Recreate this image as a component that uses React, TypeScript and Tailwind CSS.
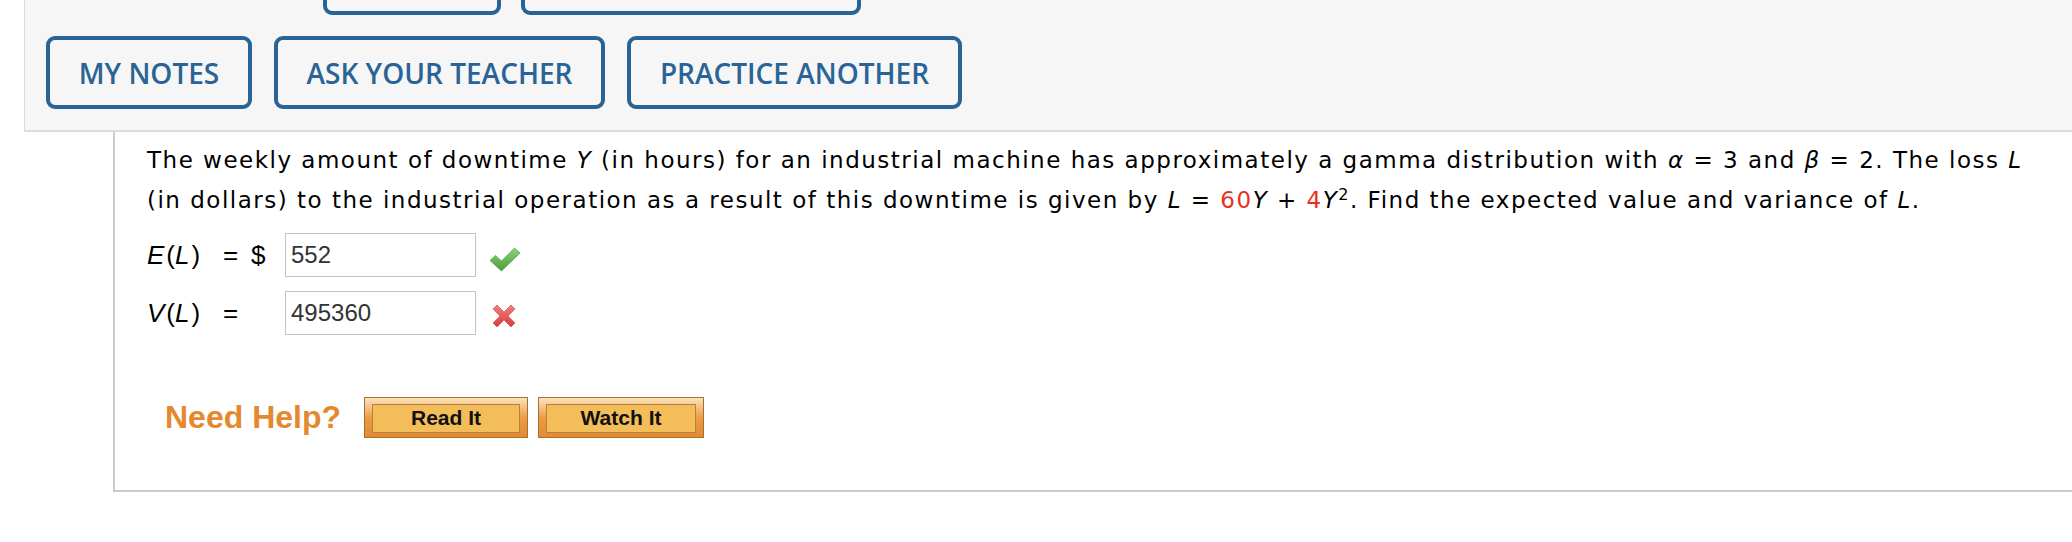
import React from 'react';

const btn =
  'flex h-[73px] shrink-0 items-center justify-center rounded-[9px] border-4 border-[#2a6496] bg-[#f6f6f6] text-[28px] font-semibold uppercase text-[#2a6496]';

function CheckMark() {
  return (
    <svg width="32" height="25" viewBox="0 0 32 25">
      <defs>
        <linearGradient id="ck" x1="0" y1="0" x2="0" y2="1">
          <stop offset="0" stopColor="#92d27c" />
          <stop offset="1" stopColor="#4a9a3a" />
        </linearGradient>
      </defs>
      <path d="M1 13.5 L6.5 8.5 L12.5 14 L25.5 1 L31 6 L12.5 24 Z" fill="url(#ck)" stroke="#5aa548" strokeWidth="0.8" strokeLinejoin="round" />
    </svg>
  );
}

function CrossMark() {
  return (
    <svg width="26" height="26" viewBox="0 0 26 26">
      <defs>
        <linearGradient id="cx" x1="0" y1="0" x2="0" y2="1">
          <stop offset="0" stopColor="#f28080" />
          <stop offset="1" stopColor="#d63c3c" />
        </linearGradient>
      </defs>
      <path
        d="M2 6 L6 2 L13 9 L20 2 L24 6 L17 13 L24 20 L20 24 L13 17 L6 24 L2 20 L9 13 Z"
        fill="url(#cx)"
        stroke="#e05a5a"
        strokeWidth="0.8"
        strokeLinejoin="round"
      />
    </svg>
  );
}

function HelpButton({ label, width }: { label: string; width: string }) {
  return (
    <div className={`${width} h-[41px] border border-[#a8702f] bg-gradient-to-b from-[#fbe2bb] via-[#ec9c42] to-[#e28a33] pt-[6px] pb-[4px] px-[7px]`}>
      <div className="flex h-full items-center justify-center border border-[#b88142] bg-[#f3bd5a] text-[21px] font-bold text-[#111]" style={{ fontFamily: '"Liberation Sans", Arial, sans-serif' }}>
        {label}
      </div>
    </div>
  );
}

export default function App() {
  return (
    <div className="h-[542px] w-full overflow-hidden bg-white">
      {/* toolbar panel */}
      <div className="ml-[24px] flex h-[132px] flex-col border-b-2 border-l border-[#dcdcdc] bg-[#f6f6f6]" style={{ fontFamily: '"Open Sans", sans-serif' }}>
        <div className="-mt-[58px] flex gap-[20px] pl-[298px]">
          <div className={`${btn} w-[178px]`} />
          <div className={`${btn} w-[340px]`} />
        </div>
        <div className="mt-[21px] flex gap-[22px] pl-[21px]">
          <button className={`${btn} w-[206px]`}>My Notes</button>
          <button className={`${btn} w-[331px]`}>Ask Your Teacher</button>
          <button className={`${btn} w-[335px]`}>Practice Another</button>
        </div>
      </div>

      {/* question box */}
      <div className="ml-[113px] h-[360px] border-b-2 border-l-2 border-[#cccccc] pl-[32px] pt-[8px]">
        <p className="whitespace-nowrap text-[23px] leading-[40px] tracking-[1.5px] text-black" style={{ fontFamily: '"DejaVu Sans", Verdana, sans-serif' }}>
          The weekly amount of downtime <i>Y</i> (in hours) for an industrial machine has approximately a gamma distribution with <i>α</i> = 3 and <i>β</i> = 2. The loss <i>L</i>
          <br />
          (in dollars) to the industrial operation as a result of this downtime is given by <i>L</i> = <span className="text-[#e3321f]">60</span><i>Y</i> + <span className="text-[#e3321f]">4</span><i>Y</i>
          <sup className="text-[16px]">2</sup>. Find the expected value and variance of <i>L</i>.
        </p>

        <div className="mt-[13px] flex flex-col gap-[14px] text-[26px] text-black" style={{ fontFamily: '"Liberation Sans", Arial, sans-serif' }}>
          <div className="flex items-center">
            <span className="w-[76px]">
              <i>E</i>
              <span className="pl-[2px]">(</span>
              <i>L</i>
              <span className="pl-[2px]">)</span>
            </span>
            <span className="w-[28px]">=</span>
            <span className="w-[34px]">$</span>
            <div className="flex h-[44px] w-[191px] items-center border border-[#c4c4c4] pl-[5px] text-[24px] text-[#333]">552</div>
            <span className="ml-[13px] mt-[8px]">
              <CheckMark />
            </span>
          </div>
          <div className="flex items-center">
            <span className="w-[76px]">
              <i>V</i>
              <span className="pl-[2px]">(</span>
              <i>L</i>
              <span className="pl-[2px]">)</span>
            </span>
            <span className="w-[28px]">=</span>
            <span className="w-[34px]" />
            <div className="flex h-[44px] w-[191px] items-center border border-[#c4c4c4] pl-[5px] text-[24px] text-[#333]">495360</div>
            <span className="ml-[15px] mt-[6px]">
              <CrossMark />
            </span>
          </div>
        </div>

        <div className="mt-[58px] flex items-center pl-[18px]">
          <span className="mr-[23px] text-[32px] font-bold text-[#e4892f]" style={{ fontFamily: '"Liberation Sans", Arial, sans-serif' }}>
            Need Help?
          </span>
          <HelpButton label="Read It" width="w-[164px]" />
          <span className="w-[10px]" />
          <HelpButton label="Watch It" width="w-[166px]" />
        </div>
      </div>
    </div>
  );
}
